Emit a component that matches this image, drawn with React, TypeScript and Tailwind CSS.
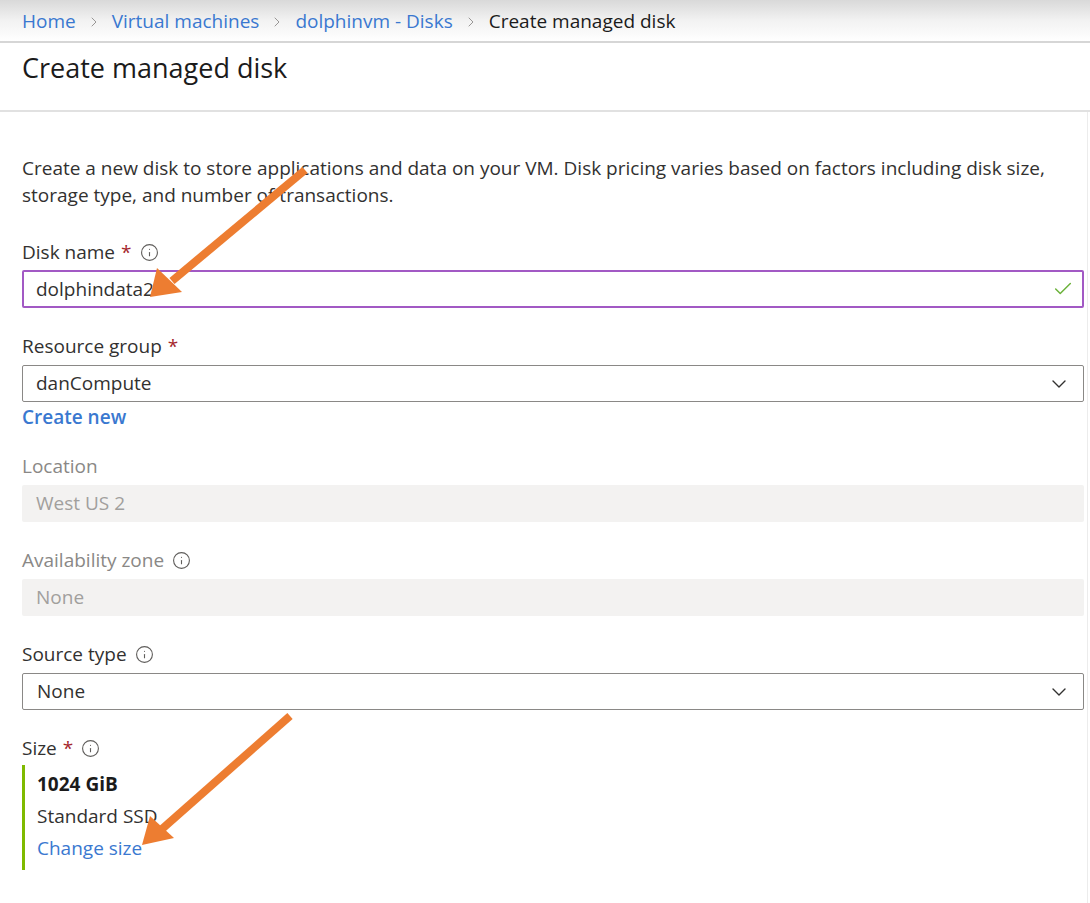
import { ChevronRight, ChevronDown, Check, Info } from 'lucide-react';

const font = { fontFamily: '"Open Sans", "Noto Sans", sans-serif' };

function Label({ text, required, info, disabled }: { text: string; required?: boolean; info?: boolean; disabled?: boolean }) {
  return (
    <div className={`flex items-center h-[26px] text-[19px] ${disabled ? 'text-[#8a8886]' : 'text-[#323130]'}`}>
      <span>{text}</span>
      {required && <span className="text-[#a4262c] ml-[6px]">*</span>}
      {info && <Info size={19} strokeWidth={1.4} className="ml-[8px] text-[#605e5c]" />}
    </div>
  );
}

export default function App() {
  return (
    <div className="relative w-[1090px] h-[903px] bg-white overflow-hidden text-[#323130]" style={font}>
      {/* breadcrumb bar with gray fade */}
      <div className="h-[43px] bg-gradient-to-b from-[#d9d9d9] via-[#f2f2f2] to-white flex items-center pl-[22px] pt-[2px] text-[19px] border-b-2 border-[#d6d6d6]">
        <span className="text-[#3a78d0]">Home</span>
        <ChevronRight size={16} strokeWidth={1.3} className="mx-[10px] text-[#8a8886]" />
        <span className="text-[#3a78d0]">Virtual machines</span>
        <ChevronRight size={16} strokeWidth={1.3} className="mx-[10px] text-[#8a8886]" />
        <span className="text-[#3a78d0]">dolphinvm - Disks</span>
        <ChevronRight size={16} strokeWidth={1.3} className="mx-[10px] text-[#8a8886]" />
        <span className="text-[#1b1b1b]">Create managed disk</span>
      </div>

      <div className="h-[69px] pl-[22px] pt-[7px] border-b-2 border-[#e1e1e1]">
        <h1 className="text-[27px] text-[#1b1b1b] leading-[36px]">Create managed disk</h1>
      </div>

      <div className="w-[1088px] border-r border-[#ececec] pl-[22px] pr-[3px] pt-[43px] pb-[40px]">
        <p className="text-[19px] leading-[27px] text-[#323130] pr-[20px]">
          Create a new disk to store applications and data on your VM. Disk pricing varies based on factors including disk size, storage type, and number of transactions.
        </p>

        <div className="mt-[30px]">
          <Label text="Disk name" required info />
          <div className="mt-[5px] h-[38px] border-2 border-[#a259c4] rounded-[2px] flex items-center justify-between pl-[12px] pr-[8px] text-[19px]">
            <span>dolphindata2</span>
            <Check size={22} strokeWidth={1.6} className="text-[#6bb23a]" />
          </div>
        </div>

        <div className="mt-[25px]">
          <Label text="Resource group" required />
          <div className="mt-[6px] h-[37px] border border-[#8a8886] rounded-[2px] flex items-center justify-between pl-[13px] pr-[12px] text-[19px]">
            <span>danCompute</span>
            <ChevronDown size={24} strokeWidth={1.4} className="text-[#323130]" />
          </div>
          <div className="mt-[1px] text-[19px] text-[#3a78d0] font-semibold leading-[28px]">Create new</div>
        </div>

        <div className="mt-[22px]">
          <Label text="Location" disabled />
          <div className="mt-[6px] h-[37px] bg-[#f3f2f1] rounded-[2px] flex items-center pl-[14px] text-[19px] text-[#a19f9d]">West US 2</div>
        </div>

        <div className="mt-[25px]">
          <Label text="Availability zone" info disabled />
          <div className="mt-[6px] h-[37px] bg-[#f3f2f1] rounded-[2px] flex items-center pl-[14px] text-[19px] text-[#a19f9d]">None</div>
        </div>

        <div className="mt-[25px]">
          <Label text="Source type" info />
          <div className="mt-[6px] h-[37px] border border-[#8a8886] rounded-[2px] flex items-center justify-between pl-[14px] pr-[12px] text-[19px]">
            <span>None</span>
            <ChevronDown size={24} strokeWidth={1.4} className="text-[#323130]" />
          </div>
        </div>

        <div className="mt-[25px]">
          <Label text="Size" required info />
          <div className="mt-[4px] border-l-[3px] border-[#7fba00] pl-[12px] pt-[3px] pb-[6px] text-[19px] leading-[32px]">
            <div className="font-bold text-[#1b1b1b]">1024 GiB</div>
            <div>Standard SSD</div>
            <div className="text-[#3a78d0]">Change size</div>
          </div>
        </div>
      </div>

      {/* annotation arrows */}
      <svg className="absolute left-0 top-0 pointer-events-none" width="1090" height="903">
        <g fill="#ed7d31" stroke="#ed7d31">
          <line x1="305" y1="170" x2="172" y2="281" strokeWidth="8" />
          <polygon points="150,297 157,268 182,292" stroke="none" />
          <line x1="290" y1="716" x2="162" y2="829" strokeWidth="8" />
          <polygon points="142,845 150,816 174,838" stroke="none" />
        </g>
      </svg>
    </div>
  );
}
